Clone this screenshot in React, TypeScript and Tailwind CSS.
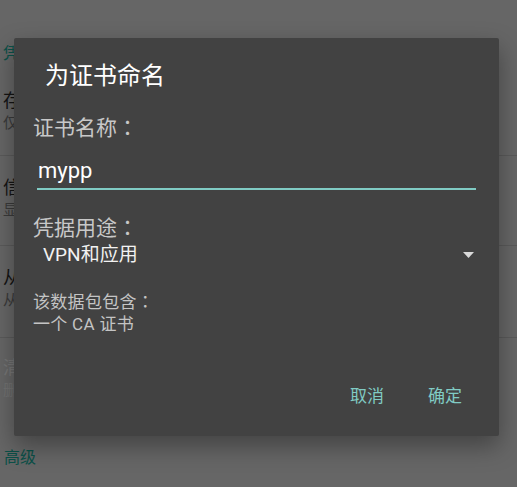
import React from 'react';

const font = { fontFamily: "Roboto, 'Noto Sans CJK SC', sans-serif" };

function Colon() {
  return <span style={{ fontFamily: "'Noto Sans CJK JP', sans-serif" }}>：</span>;
}

function SettingItem({
  title,
  summary,
  className,
  disabled,
}: {
  title: string;
  summary: string;
  className: string;
  disabled?: boolean;
}) {
  return (
    <div className={className}>
      <div className={`text-[18px] leading-[24px] whitespace-nowrap ${disabled ? 'text-[#767676]' : 'text-[#141414]'}`}>
        {title}
      </div>
      <div className={`text-[15px] leading-[20px] whitespace-nowrap ${disabled ? 'text-[#727272]' : 'text-[#3a3a3a]'}`}>
        {summary}
      </div>
    </div>
  );
}

export default function App() {
  return (
    <div
      className="relative w-[517px] h-[487px] overflow-hidden bg-[#666666] [text-spacing-trim:space-all]"
      style={font}
    >
      {/* settings page behind the scrim */}
      <div className="flex flex-col pt-[44px]">
        <div className="pl-[3px] text-[16px] leading-[20px] text-[#0b5048]">凭据存储</div>
        <SettingItem
          className="h-[92px] pl-[3px] pt-[25px] border-b border-[#5a5a5a]"
          title="存储类型"
          summary="仅限软件"
        />
        <SettingItem
          className="h-[90px] pl-[3px] pt-[20px] border-b border-[#5a5a5a]"
          title="信任的凭据"
          summary="显示可信的 CA 证书"
        />
        <SettingItem
          className="h-[92px] pl-[3px] pt-[20px] border-b border-[#5a5a5a]"
          title="从存储设备安装"
          summary="从存储设备安装证书"
        />
        <SettingItem
          className="h-[110px] pl-[3px] pt-[18px]"
          title="清除凭据"
          summary="删除所有证书"
          disabled
        />
        <div className="pl-[4px] text-[16px] leading-[20px] text-[#0b5048]">高级</div>
      </div>

      {/* dialog */}
      <div className="absolute left-[14px] top-[38px] w-[485px] h-[398px] flex flex-col bg-[#424242] rounded-[2px] shadow-[0_10px_24px_rgba(0,0,0,0.35)]">
        <div className="pt-[22px] pl-[31px] text-[24px] leading-[32px] text-white">为证书命名</div>

        <div className="mt-[20px] pl-[19px] text-[21px] leading-[28px] text-[#c8c8c8]">
          证书名称<Colon />
        </div>

        <div className="mt-[15px] mx-[23px] pb-[3px] border-b-2 border-[#80cbc4]">
          <div className="pl-[1px] text-[22px] leading-[28px] text-white">mypp</div>
        </div>

        <div className="mt-[22px] pl-[19px] text-[21px] leading-[28px] text-[#c8c8c8]">
          凭据用途<Colon />
        </div>

        <div className="mt-[1px] flex items-center justify-between pl-[29px] pr-[25px]">
          <span className="text-[19px] leading-[24px] text-[#f2f2f2]">VPN和应用</span>
          <svg width="11" height="6" viewBox="0 0 11 6">
            <polygon points="0,0 11,0 5.5,6" fill="#d9d9d9" />
          </svg>
        </div>

        <div className="mt-[23px] pl-[19px] text-[17px] leading-[22px] tracking-[0.3px] text-[#c4c4c4]">
          <div>
            该数据包包含<Colon />
          </div>
          <div>一个 CA 证书</div>
        </div>

        <div className="mt-auto mb-[28px] flex justify-end gap-[44px] pr-[37px] text-[17px] leading-[24px] text-[#80cbc4]">
          <span>取消</span>
          <span>确定</span>
        </div>
      </div>
    </div>
  );
}
